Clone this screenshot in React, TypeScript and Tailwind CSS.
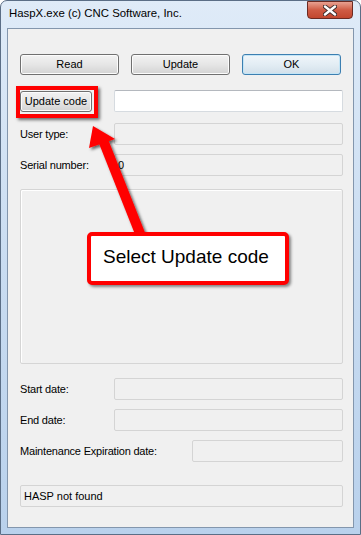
import React from 'react';

const font = { fontFamily: '"Liberation Sans", Arial, sans-serif' };

function WinButton({ label, w, primary }: { label: string; w: string; primary?: boolean }) {
  return (
    <div
      className={`${w} h-[21px] rounded-[3px] border flex items-center justify-center text-[11px] text-black ${
        primary
          ? 'border-[#3c7fb1] bg-gradient-to-b from-[#f0f6fa] via-[#e3edf4] to-[#d2e0ea] shadow-[inset_0_0_0_1px_#c4e5f6]'
          : 'border-[#707070] bg-gradient-to-b from-[#f2f2f2] via-[#e6e6e6] to-[#d3d3d3] shadow-[inset_0_0_0_1px_#fcfcfc]'
      }`}
    >
      {label}
    </div>
  );
}

function Field({ white, children, className = '' }: { white?: boolean; children?: React.ReactNode; className?: string }) {
  return (
    <div
      className={`h-[22px] rounded-[2px] border flex items-center px-[3px] text-[11px] text-black ${
        white ? 'bg-white border-[#d6dbe0] border-t-[#b4b8be]' : 'bg-[#f0f0f0] border-[#d4d4d4]'
      } ${className}`}
    >
      {children}
    </div>
  );
}

function Row({ label, children, className = '' }: { label: string; children: React.ReactNode; className?: string }) {
  return (
    <div className={`flex items-center ${className}`}>
      <div className="w-[94px] shrink-0 text-[11px] tracking-[-0.2px] text-black">{label}</div>
      {children}
    </div>
  );
}

export default function App() {
  return (
    <div style={font} className="relative w-[361px] h-[535px] overflow-hidden">
      {/* window frame */}
      <div className="w-[361px] h-[535px] rounded-t-[7px] border border-[#5b6e86] bg-gradient-to-b from-[#dfebf8] via-[#c9dcf1] to-[#b9d1ec] px-[6px] pt-[27px] pb-[6px] flex flex-col">
        {/* title bar */}
        <div className="absolute left-[9px] top-[5px] text-[11.4px] text-black">HaspX.exe (c) CNC Software, Inc.</div>
        <div className="absolute left-[307px] top-[1px] w-[46px] h-[18px] rounded-b-[4px] border border-[#6b2a22] bg-gradient-to-b from-[#e8a191] via-[#cf5b44] to-[#c2462e] flex items-center justify-center">
          <svg width="14" height="11" viewBox="0 0 14 11">
            <path d="M2 1.5 L12 9.5 M12 1.5 L2 9.5" stroke="#3b2a2a" strokeWidth="4.2" strokeLinecap="round" />
            <path d="M2 1.5 L12 9.5 M12 1.5 L2 9.5" stroke="#ffffff" strokeWidth="2.4" strokeLinecap="round" />
          </svg>
        </div>

        {/* client area */}
        <div className="flex-1 border border-[#8396ad] bg-[#f0f0f0] pl-[12px] pr-[10px] flex flex-col">
          <div className="mt-[25px] flex gap-[12px]">
            <WinButton label="Read" w="w-[99px]" />
            <WinButton label="Update" w="w-[99px]" />
            <WinButton label="OK" w="w-[99px]" primary />
          </div>

          <div className="mt-[15px] flex items-center">
            <div className="w-[94px] shrink-0">
              <WinButton label="Update code" w="w-[72px]" />
            </div>
            <Field white className="flex-1" />
          </div>

          <Row label="User type:" className="mt-[11px]">
            <Field className="flex-1" />
          </Row>

          <Row label="Serial number:" className="mt-[9px]">
            <Field className="flex-1">0</Field>
          </Row>

          <div className="mt-[13px] h-[175px] rounded-[2px] border border-[#d5d5d5] shadow-[inset_1px_1px_0_#ffffff]" />

          <Row label="Start date:" className="mt-[14px]">
            <Field className="flex-1" />
          </Row>
          <Row label="End date:" className="mt-[9px]">
            <Field className="flex-1" />
          </Row>
          <div className="mt-[9px] flex items-center">
            <div className="w-[172px] shrink-0 text-[11px] tracking-[-0.2px] text-black">Maintenance Expiration date:</div>
            <Field className="flex-1" />
          </div>

          <Field className="mt-[23px]">HASP not found</Field>
        </div>
      </div>

      {/* annotation: red highlight box */}
      <div className="absolute left-[16px] top-[86px] w-[82px] h-[32px] border-4 border-[#ff0000] shadow-[2px_2px_3px_rgba(0,0,0,0.55)]" />

      {/* annotation: arrow */}
      <svg className="absolute left-0 top-0 pointer-events-none" width="361" height="535" viewBox="0 0 361 535">
        <defs>
          <filter id="sh" x="-20%" y="-20%" width="140%" height="140%">
            <feDropShadow dx="2" dy="2" stdDeviation="1.5" floodColor="#000" floodOpacity="0.6" />
          </filter>
        </defs>
        <g filter="url(#sh)" fill="#ff0000">
          <polygon points="93,126 89,148 115,139" />
          <line x1="103" y1="140" x2="141" y2="236" stroke="#ff0000" strokeWidth="10" />
        </g>
      </svg>

      {/* annotation: callout */}
      <div className="absolute left-[87px] top-[232px] w-[202px] h-[53px] rounded-[5px] border-4 border-[#ff0000] bg-white shadow-[2px_2px_3px_rgba(0,0,0,0.45)] flex items-center pl-[12px] pb-[3px] text-[19px] text-black">
        Select Update code
      </div>
    </div>
  );
}
